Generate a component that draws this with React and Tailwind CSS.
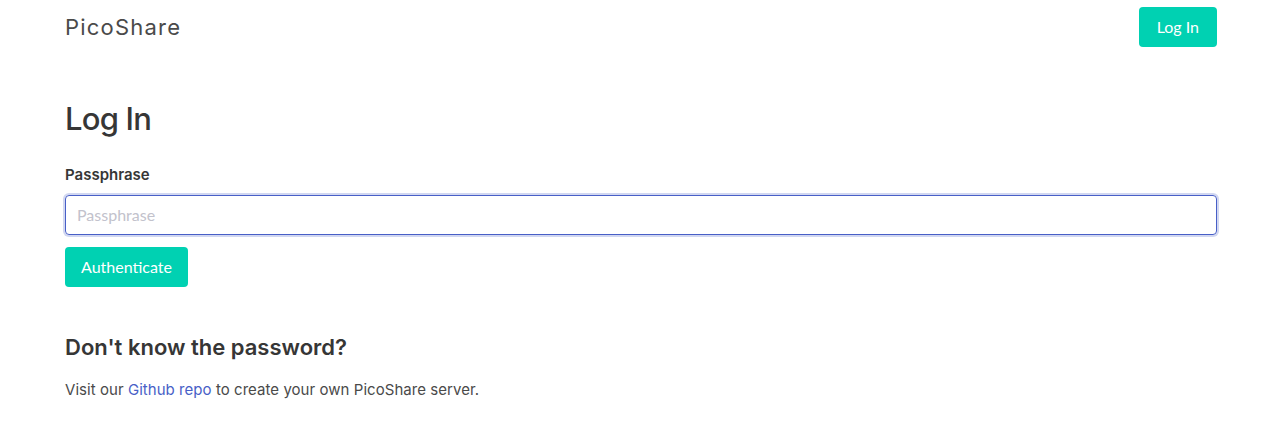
export default function App() {
  const karla = { fontFamily: 'Inter, "Noto Sans", sans-serif' };
  return (
    <div className="min-h-[438px] bg-white text-[#4a4a4a]" style={karla}>
      <nav className="mx-auto flex h-[54px] w-[1152px] items-center justify-between">
        <a className="text-[22px] tracking-[1.2px] text-[#4a4a4a]">PicoShare</a>
        <button
          className="h-[40px] rounded-[4px] bg-[#00d1b2] px-[18px] text-[16px] text-white"
          style={{ fontFamily: 'Lato, "Open Sans", sans-serif' }}
        >
          Log In
        </button>
      </nav>
      <main className="mx-auto w-[1152px] pt-[48px]">
        <h1 className="text-[31px] font-medium leading-[1.1] tracking-[-0.8px] text-[#363636]">Log In</h1>
        <label className="mt-[28px] block text-[15px] font-semibold text-[#363636]">Passphrase</label>
        <input
          className="mt-[8px] block h-[40px] w-full rounded-[4px] border border-[#485fc7] px-[11px] text-[16px] shadow-[0_0_0_2px_rgba(72,95,199,0.25)] outline-none placeholder:text-[#c2c2cc]"
          style={{ fontFamily: 'Lato, "Open Sans", sans-serif' }}
          placeholder="Passphrase"
        />
        <button
          className="mt-[12px] h-[40px] rounded-[4px] bg-[#00d1b2] px-[16px] text-[16px] text-white"
          style={{ fontFamily: 'Lato, "Open Sans", sans-serif' }}
        >
          Authenticate
        </button>
        <h2 className="mt-[44px] text-[22px] font-semibold text-[#363636]">Don't know the password?</h2>
        <p className="mt-[15px] text-[15px] tracking-[0.05px]">
          Visit our <a className="text-[#485fc7]">Github repo</a> to create your own PicoShare server.
        </p>
      </main>
    </div>
  );
}
